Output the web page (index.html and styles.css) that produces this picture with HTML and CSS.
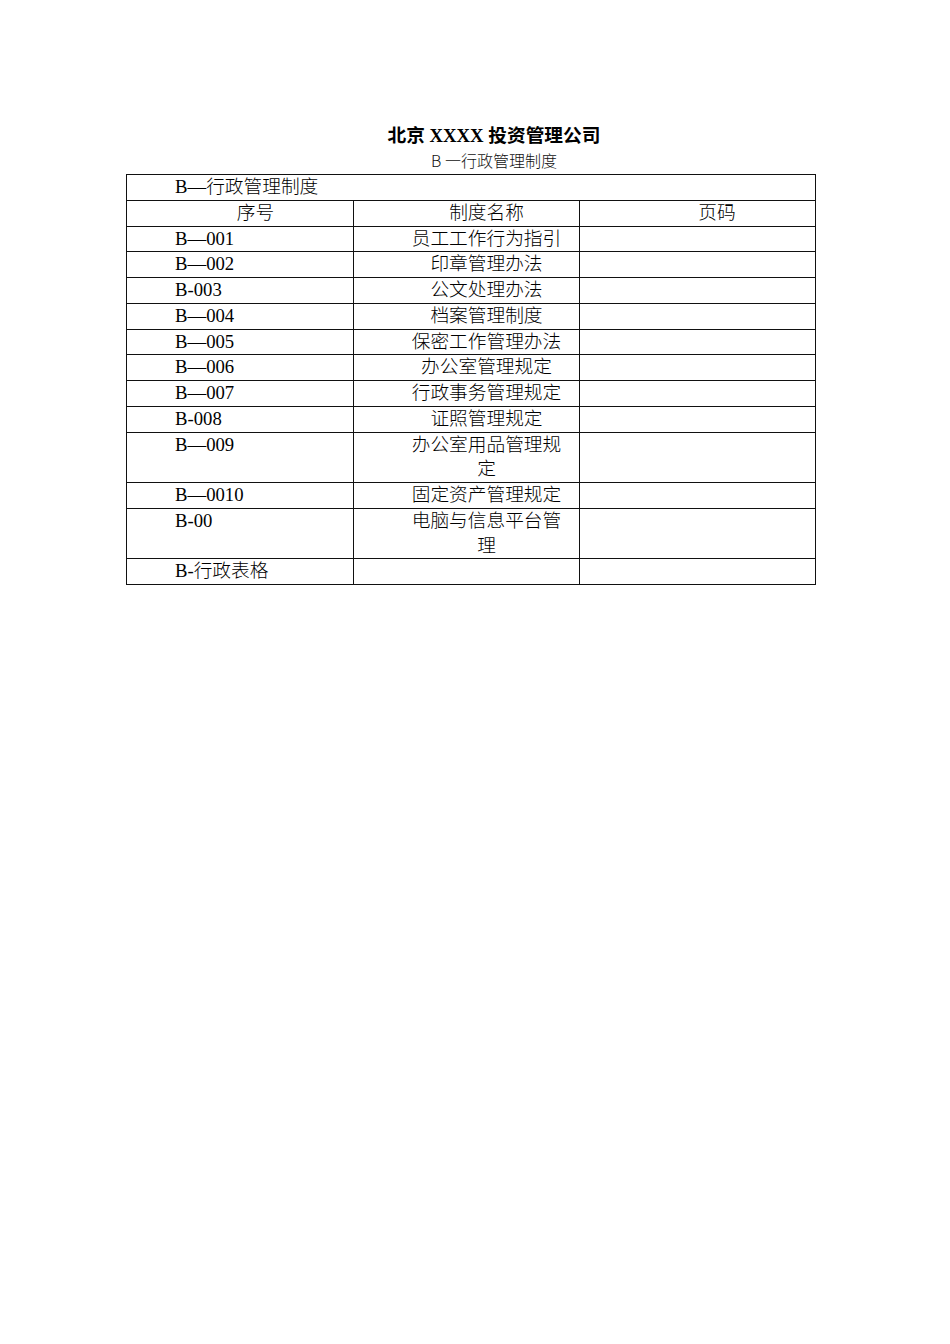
FILE: index.html
```html
<!DOCTYPE html>
<html lang="zh-CN">
<head>
<meta charset="utf-8">
<title>北京 XXXX 投资管理公司</title>
<link rel="stylesheet" href="styles.css">
</head>
<body>
<div class="page">
  <h1 class="title">北京 XXXX 投资管理公司</h1>
  <p class="subtitle">B 一行政管理制度</p>
  <table class="index">
    <colgroup>
      <col class="c1"><col class="c2"><col class="c3">
    </colgroup>
    <tr><td class="span" colspan="3">B—行政管理制度</td></tr>
    <tr class="head"><td class="k">序号</td><td class="n">制度名称</td><td class="p">页码</td></tr>
    <tr><td class="k">B—001</td><td class="n">员工工作行为指引</td><td class="p"></td></tr>
    <tr><td class="k">B—002</td><td class="n">印章管理办法</td><td class="p"></td></tr>
    <tr><td class="k">B-003</td><td class="n">公文处理办法</td><td class="p"></td></tr>
    <tr><td class="k">B—004</td><td class="n">档案管理制度</td><td class="p"></td></tr>
    <tr><td class="k">B—005</td><td class="n">保密工作管理办法</td><td class="p"></td></tr>
    <tr><td class="k">B—006</td><td class="n">办公室管理规定</td><td class="p"></td></tr>
    <tr><td class="k">B—007</td><td class="n">行政事务管理规定</td><td class="p"></td></tr>
    <tr><td class="k">B-008</td><td class="n">证照管理规定</td><td class="p"></td></tr>
    <tr><td class="k">B—009</td><td class="n">办公室用品管理规定</td><td class="p"></td></tr>
    <tr><td class="k">B—0010</td><td class="n">固定资产管理规定</td><td class="p"></td></tr>
    <tr><td class="k">B-00</td><td class="n">电脑与信息平台管理</td><td class="p"></td></tr>
    <tr><td class="k">B-行政表格</td><td class="n"></td><td class="p"></td></tr>
  </table>
</div>
</body>
</html>
```

FILE: styles.css
```css
html, body {
  margin: 0;
  padding: 0;
  background: #fff;
  color: #000;
}
.page {
  padding: 124px 0 0 126px;
  width: 689px;
}
.title {
  margin: 0;
  padding-left: 47px;
  text-align: center;
  font-family: "Liberation Serif", "Noto Sans CJK SC", serif;
  font-weight: bold;
  font-size: 18.7px;
  line-height: 24px;
}
.subtitle {
  margin: 0 0 2px 0;
  padding-left: 47px;
  text-align: center;
  font-family: "Noto Sans CJK SC", sans-serif;
  font-weight: 300;
  font-size: 16px;
  line-height: 24px;
  color: #111;
}
.index {
  width: 689px;
  border-collapse: collapse;
  table-layout: fixed;
  font-family: "Liberation Serif", "Noto Sans CJK SC", serif;
  font-weight: 300;
  font-size: 18.7px;
  line-height: 24.75px;
}
.c1 { width: 227px; }
.c2 { width: 226px; }
.c3 { width: 236px; }
.index td {
  border: 1px solid #111;
  padding: 0;
  vertical-align: top;
  height: 24.75px;
}
.index td.span {
  padding-left: 48px;
  text-align: left;
}
.index td.k {
  padding: 0 17px 0 48px;
  text-align: left;
}
.index .head td.k {
  text-align: center;
}
.index td.n {
  padding: 0 12px 0 52px;
  text-align: center;
}
.index td.p {
  padding: 0 9px 0 48px;
  text-align: center;
}
```
